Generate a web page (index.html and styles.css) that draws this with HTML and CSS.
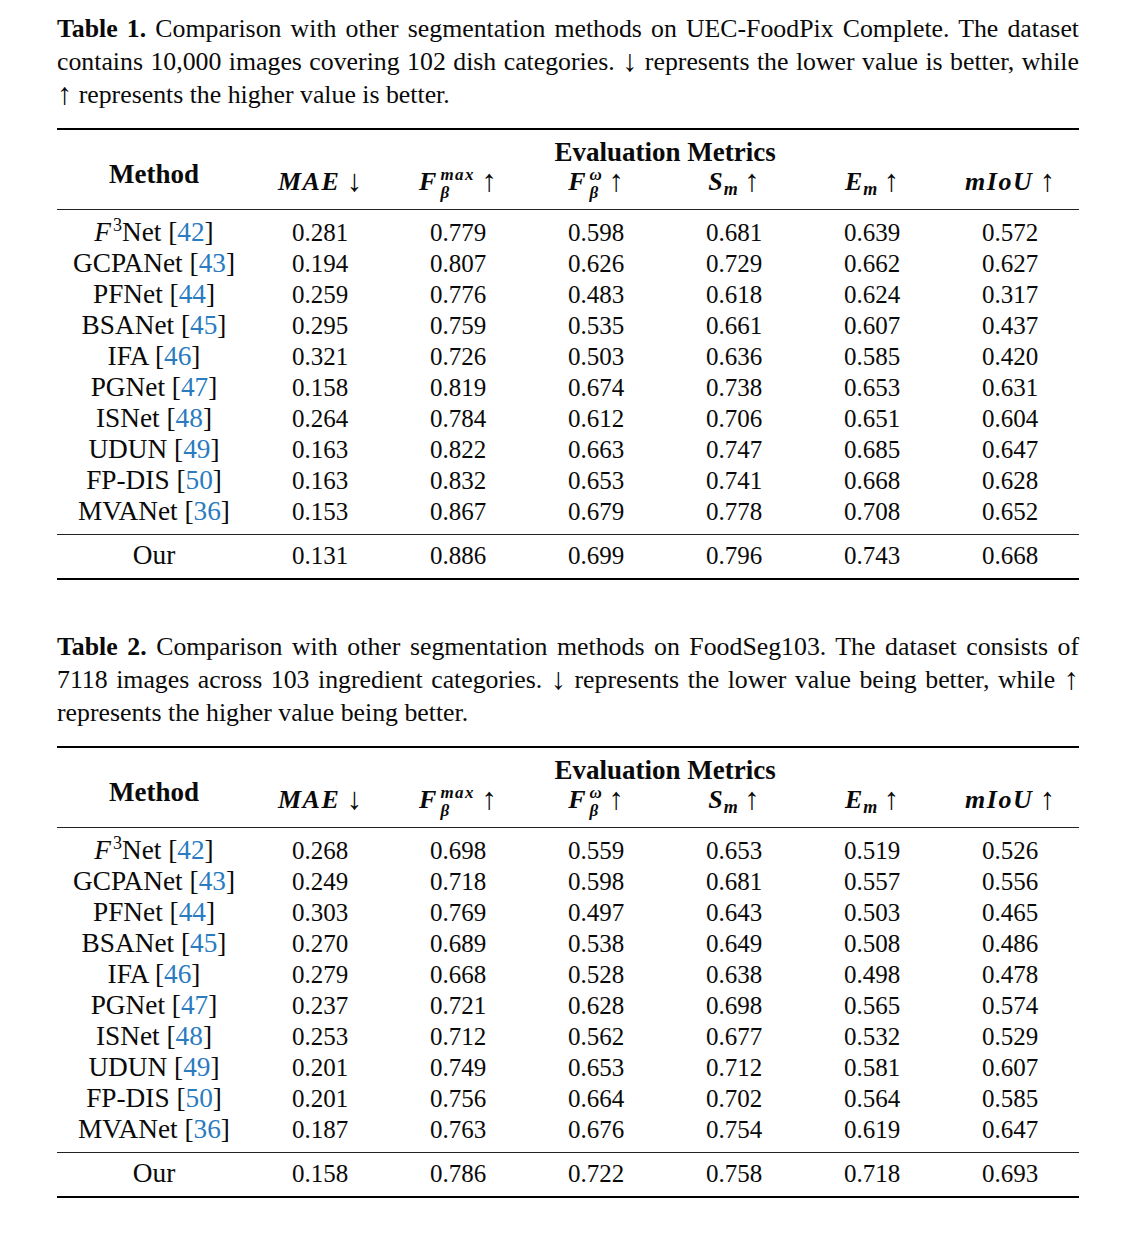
FILE: index.html
```html
<!DOCTYPE html>
<html>
<head>
<meta charset="utf-8">
<link rel="stylesheet" href="styles.css">
</head>
<body>
<div class="page">

<section class="block">
  <div class="caption">
    <span class="cl full"><b>Table 1.</b> Comparison with other segmentation methods on UEC-FoodPix Complete. The dataset</span>
    <span class="cl full">contains 10,000 images covering 102 dish categories. <span class="arr">↓</span> represents the lower value is better, while</span>
    <span class="cl"><span class="arr">↑</span> represents the higher value is better.</span>
  </div>
  <table class="res">
    <colgroup><col class="cm"><col class="cd"><col class="cd"><col class="cd"><col class="cd"><col class="cd"><col class="cd"></colgroup>
    <thead>
      <tr class="h1"><th rowspan="2" class="meth">Method</th><th colspan="6" class="eval">Evaluation Metrics</th></tr>
      <tr class="h2">
        <th><i class="mt">MAE</i> <span class="arr">↓</span></th>
        <th><i>F</i><span class="ss"><i class="mt">max</i><i>β</i></span> <span class="arr">↑</span></th>
        <th><i>F</i><span class="ss"><i>ω</i><i>β</i></span> <span class="arr">↑</span></th>
        <th><i>S</i><i class="sb">m</i> <span class="arr">↑</span></th>
        <th><i>E</i><i class="sb">m</i> <span class="arr">↑</span></th>
        <th><i class="mt">mIoU</i> <span class="arr">↑</span></th>
      </tr>
    </thead>
    <tbody>
      <tr class="first"><td class="m"><i>F</i><sup class="sp">3</sup>Net [<a>42</a>]</td><td>0.281</td><td>0.779</td><td>0.598</td><td>0.681</td><td>0.639</td><td>0.572</td></tr>
      <tr><td class="m">GCPANet [<a>43</a>]</td><td>0.194</td><td>0.807</td><td>0.626</td><td>0.729</td><td>0.662</td><td>0.627</td></tr>
      <tr><td class="m">PFNet [<a>44</a>]</td><td>0.259</td><td>0.776</td><td>0.483</td><td>0.618</td><td>0.624</td><td>0.317</td></tr>
      <tr><td class="m">BSANet [<a>45</a>]</td><td>0.295</td><td>0.759</td><td>0.535</td><td>0.661</td><td>0.607</td><td>0.437</td></tr>
      <tr><td class="m">IFA [<a>46</a>]</td><td>0.321</td><td>0.726</td><td>0.503</td><td>0.636</td><td>0.585</td><td>0.420</td></tr>
      <tr><td class="m">PGNet [<a>47</a>]</td><td>0.158</td><td>0.819</td><td>0.674</td><td>0.738</td><td>0.653</td><td>0.631</td></tr>
      <tr><td class="m">ISNet [<a>48</a>]</td><td>0.264</td><td>0.784</td><td>0.612</td><td>0.706</td><td>0.651</td><td>0.604</td></tr>
      <tr><td class="m">UDUN [<a>49</a>]</td><td>0.163</td><td>0.822</td><td>0.663</td><td>0.747</td><td>0.685</td><td>0.647</td></tr>
      <tr><td class="m">FP-DIS [<a>50</a>]</td><td>0.163</td><td>0.832</td><td>0.653</td><td>0.741</td><td>0.668</td><td>0.628</td></tr>
      <tr class="last"><td class="m">MVANet [<a>36</a>]</td><td>0.153</td><td>0.867</td><td>0.679</td><td>0.778</td><td>0.708</td><td>0.652</td></tr>
      <tr class="our"><td class="m">Our</td><td>0.131</td><td>0.886</td><td>0.699</td><td>0.796</td><td>0.743</td><td>0.668</td></tr>
    </tbody>
  </table>
</section>

<section class="block second">
  <div class="caption">
    <span class="cl full"><b>Table 2.</b> Comparison with other segmentation methods on FoodSeg103. The dataset consists of</span>
    <span class="cl full">7118 images across 103 ingredient categories. <span class="arr">↓</span> represents the lower value being better, while <span class="arr">↑</span></span>
    <span class="cl">represents the higher value being better.</span>
  </div>
  <table class="res">
    <colgroup><col class="cm"><col class="cd"><col class="cd"><col class="cd"><col class="cd"><col class="cd"><col class="cd"></colgroup>
    <thead>
      <tr class="h1"><th rowspan="2" class="meth">Method</th><th colspan="6" class="eval">Evaluation Metrics</th></tr>
      <tr class="h2">
        <th><i class="mt">MAE</i> <span class="arr">↓</span></th>
        <th><i>F</i><span class="ss"><i class="mt">max</i><i>β</i></span> <span class="arr">↑</span></th>
        <th><i>F</i><span class="ss"><i>ω</i><i>β</i></span> <span class="arr">↑</span></th>
        <th><i>S</i><i class="sb">m</i> <span class="arr">↑</span></th>
        <th><i>E</i><i class="sb">m</i> <span class="arr">↑</span></th>
        <th><i class="mt">mIoU</i> <span class="arr">↑</span></th>
      </tr>
    </thead>
    <tbody>
      <tr class="first"><td class="m"><i>F</i><sup class="sp">3</sup>Net [<a>42</a>]</td><td>0.268</td><td>0.698</td><td>0.559</td><td>0.653</td><td>0.519</td><td>0.526</td></tr>
      <tr><td class="m">GCPANet [<a>43</a>]</td><td>0.249</td><td>0.718</td><td>0.598</td><td>0.681</td><td>0.557</td><td>0.556</td></tr>
      <tr><td class="m">PFNet [<a>44</a>]</td><td>0.303</td><td>0.769</td><td>0.497</td><td>0.643</td><td>0.503</td><td>0.465</td></tr>
      <tr><td class="m">BSANet [<a>45</a>]</td><td>0.270</td><td>0.689</td><td>0.538</td><td>0.649</td><td>0.508</td><td>0.486</td></tr>
      <tr><td class="m">IFA [<a>46</a>]</td><td>0.279</td><td>0.668</td><td>0.528</td><td>0.638</td><td>0.498</td><td>0.478</td></tr>
      <tr><td class="m">PGNet [<a>47</a>]</td><td>0.237</td><td>0.721</td><td>0.628</td><td>0.698</td><td>0.565</td><td>0.574</td></tr>
      <tr><td class="m">ISNet [<a>48</a>]</td><td>0.253</td><td>0.712</td><td>0.562</td><td>0.677</td><td>0.532</td><td>0.529</td></tr>
      <tr><td class="m">UDUN [<a>49</a>]</td><td>0.201</td><td>0.749</td><td>0.653</td><td>0.712</td><td>0.581</td><td>0.607</td></tr>
      <tr><td class="m">FP-DIS [<a>50</a>]</td><td>0.201</td><td>0.756</td><td>0.664</td><td>0.702</td><td>0.564</td><td>0.585</td></tr>
      <tr class="last"><td class="m">MVANet [<a>36</a>]</td><td>0.187</td><td>0.763</td><td>0.676</td><td>0.754</td><td>0.619</td><td>0.647</td></tr>
      <tr class="our"><td class="m">Our</td><td>0.158</td><td>0.786</td><td>0.722</td><td>0.758</td><td>0.718</td><td>0.693</td></tr>
    </tbody>
  </table>
</section>

</div>
</body>
</html>
```

FILE: styles.css
```css
html, body {
  margin: 0;
  padding: 0;
  background: #fff;
}
body {
  font-family: "Liberation Serif", "Times New Roman", serif;
  color: #0a0a0a;
}
.page {
  width: 1022px;
  padding: 12px 0 0 57px;
}
.block.second {
  margin-top: 50px;
}
.caption {
  font-size: 25.8px;
  line-height: 33px;
  margin-bottom: 17px;
}
.cl {
  display: block;
  height: 33px;
  text-align: left;
}
.cl.full {
  text-align: justify;
  text-align-last: justify;
}
.arr {
  font-family: "Liberation Serif", "DejaVu Serif", serif;
  font-style: normal;
  font-weight: normal;
  font-size: 1.18em;
  line-height: 0;
  vertical-align: -1px;
}
.res {
  width: 1022px;
  table-layout: fixed;
  border-collapse: separate;
  border-spacing: 0;
}
.res col.cm { width: 194px; }
.res col.cd { width: 138px; }
.res th, .res td {
  padding: 0;
  text-align: center;
  white-space: nowrap;
}
.res th {
  font-size: 26px;
  font-weight: bold;
}
.res tr.h1 th {
  border-top: 2px solid #000;
  padding-top: 8px;
  line-height: 28px;
  height: 28px;
}
.res th.meth {
  vertical-align: middle;
  padding-top: 1px;
  border-bottom: 1px solid #222;
  font-size: 27px;
}
.res th.eval {
  font-size: 27px;
}
.res tr.h2 th {
  line-height: 32px;
  height: 32px;
  padding-bottom: 11px;
  border-bottom: 1px solid #222;
  font-size: 26px;
}
.res tr.h2 th i {
  font-style: italic;
}
.mt {
  letter-spacing: 1.5px;
}
.ss {
  display: inline-flex;
  flex-direction: column;
  align-items: flex-start;
  font-size: 17px;
  line-height: 18px;
  vertical-align: 10px;
  margin: -10px 0 -10px 4px;
}
.sb {
  font-size: 18px;
  vertical-align: -5px;
  line-height: 0;
  margin-left: 1px;
}
.res td {
  font-size: 25px;
  line-height: 31px;
  height: 31px;
}
.res td.m {
  font-size: 27.3px;
}
.sp {
  font-size: 18px;
  line-height: 0;
  vertical-align: 10px;
  margin-left: 2px;
}
.res a {
  color: #2a7bbf;
  text-decoration: none;
}
.res tr.first td {
  padding-top: 7px;
}
.res tr.last td {
  padding-bottom: 7px;
  border-bottom: 1px solid #222;
}
.res tr.our td {
  padding-top: 5px;
  padding-bottom: 7px;
  border-bottom: 2px solid #000;
}
```
